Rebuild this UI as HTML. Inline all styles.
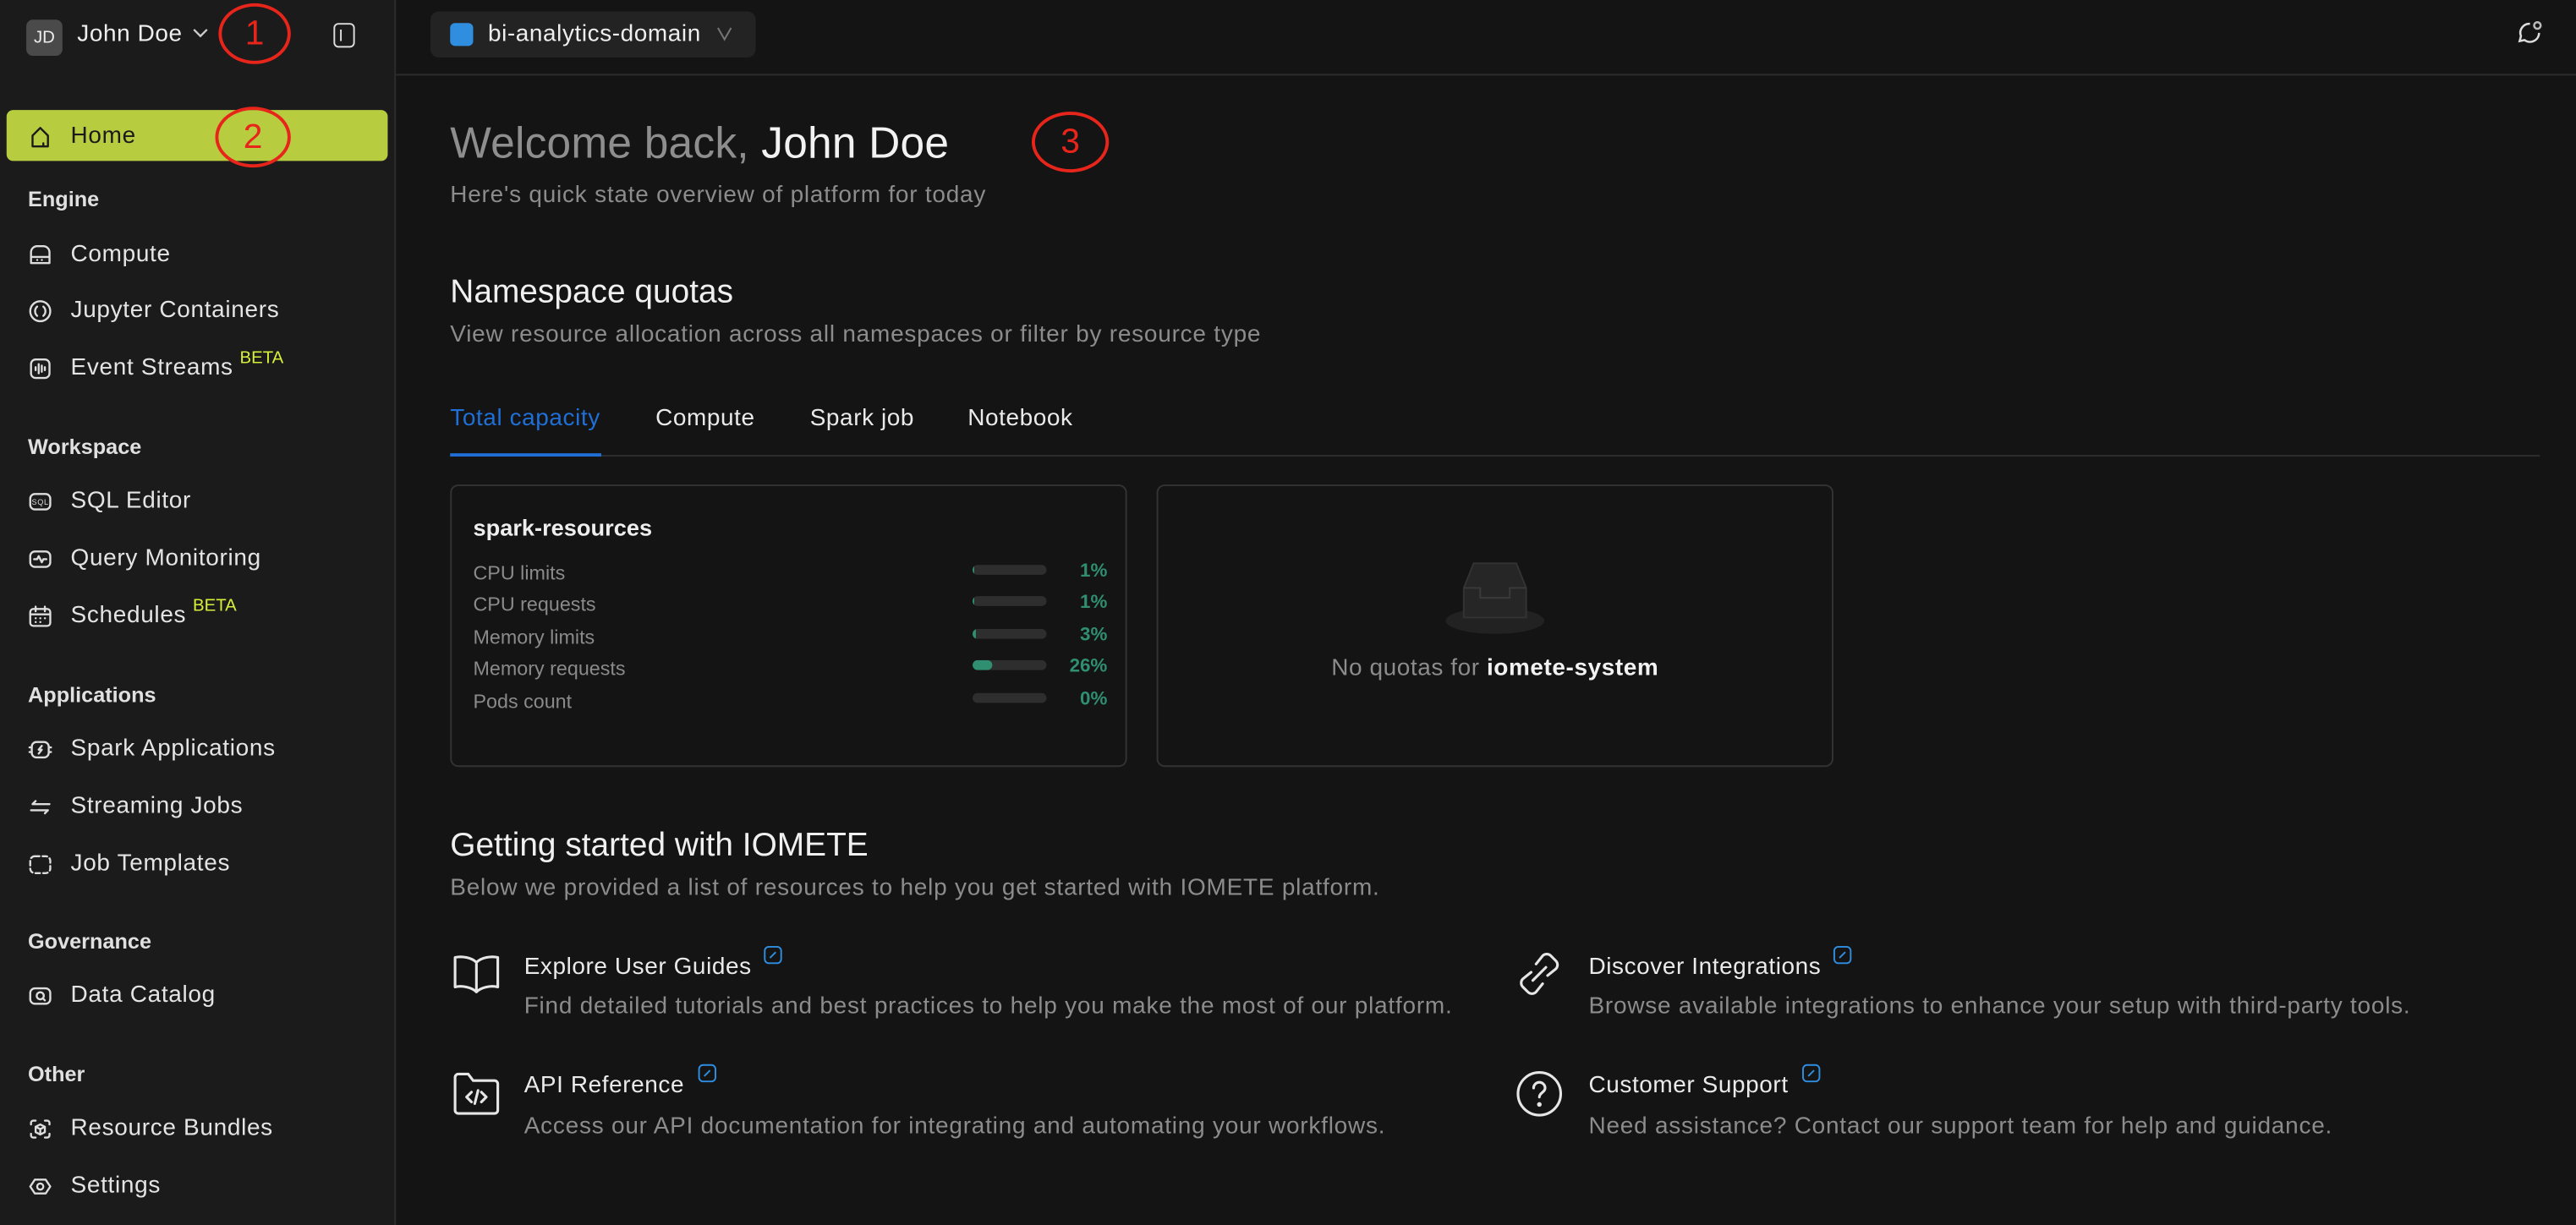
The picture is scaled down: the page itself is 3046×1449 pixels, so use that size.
<!DOCTYPE html>
<html><head><meta charset="utf-8"><style>
html,body{margin:0;padding:0;background:#141414;width:3046px;height:1448px;overflow:hidden}
#w{position:absolute;left:0;top:0;width:1568px;height:746px;transform:scale(1.9426);transform-origin:0 0;font-family:"Liberation Sans",sans-serif;color:#e6e6e6}
.a{position:absolute;white-space:nowrap}
.t14{font-size:14.4px;letter-spacing:.3px}
#sb{position:absolute;left:0;top:0;width:240px;height:746px;background:#1b1b1b;border-right:1px solid #2c2c2c}
.sec{position:absolute;left:17px;font-size:13px;font-weight:bold;color:#e0e0e0;transform:translateY(-50%)}
.it{position:absolute;left:17px;font-size:14.4px;letter-spacing:.35px;color:#e4e4e4;transform:translateY(-50%);display:flex;align-items:center}
.it svg{width:15px;height:15px;margin-right:11px;fill:none;stroke:#ddd;stroke-width:1.3;stroke-linecap:round;stroke-linejoin:round}
.beta{color:#d8ef3a;font-size:10.5px;position:relative;top:-6px;margin-left:4px;letter-spacing:0}
.circ{position:absolute;border:2px solid #e8251b;border-radius:50%;color:#e8251b;font-size:21px;display:flex;align-items:center;justify-content:center;box-sizing:border-box}
.row{position:absolute;left:13px;width:386px;font-size:12px;color:#8a8a8a;transform:translateY(-50%)}
.bar{position:absolute;left:304px;top:2px;width:45px;height:6px;border-radius:3px;background:#2e2e2e;overflow:hidden}
.bar i{position:absolute;left:0;top:0;bottom:0;background:#2f8f70}
.pct{position:absolute;right:0;top:0;color:#2f8f70;font-weight:bold;font-size:11.5px}
.gi svg{position:absolute;width:30px;height:30px;fill:none;stroke:#e6e6e6;stroke-width:1.6;stroke-linecap:round;stroke-linejoin:round}
.gt{position:absolute;font-size:14.4px;letter-spacing:.3px;color:#eaeaea;transform:translateY(-50%)}
.gd{position:absolute;font-size:14.4px;letter-spacing:.4px;color:#8c8c8c;transform:translateY(-50%)}
.ext{display:inline-block;width:11px;height:11px;border:1.3px solid #2f8ee0;border-radius:3px;position:relative;top:-6px;margin-left:8px;box-sizing:border-box}
.ext:after{content:"";position:absolute;left:2px;top:4px;width:5px;height:1.2px;background:#2f8ee0;transform:rotate(-45deg)}
</style></head><body><div id="w">
<div id="sb">
 <div class="a" style="left:16px;top:12px;width:22px;height:22px;background:#4a4a4a;border-radius:4px;font-size:10.5px;color:#eee;display:flex;align-items:center;justify-content:center">JD</div>
 <div class="a t14" style="left:47px;top:13px;color:#eee">John Doe</div>
 <svg class="a" style="left:117px;top:17px" width="10" height="7" viewBox="0 0 10 7"><path d="M1 1l4 4 4-4" stroke="#ccc" fill="none" stroke-width="1.2"/></svg>
 <div class="circ" style="left:133px;top:2px;width:44px;height:37px">1</div>
 <div class="a" style="left:203px;top:14px;width:13px;height:15px;border:1.4px solid #ddd;border-radius:3px;box-sizing:border-box"><div style="position:absolute;left:2.5px;top:2.5px;width:1.4px;height:7px;background:#ddd"></div></div>
 <div class="a" style="left:4px;top:67px;width:232px;height:31px;background:#b8cc40;border-radius:4px"></div>
 <div class="it" style="top:83px;color:#1b1b1b"><svg viewBox="0 0 16 16" style="stroke:#1b1b1b"><path d="M3 14V7l5-5 5 5v7z"/><path d="M10 12v2"/></svg>Home</div>
 <div class="circ" style="left:131px;top:65px;width:46px;height:37px">2</div>
 <div class="sec" style="top:121px">Engine</div>
 <div class="it" style="top:155px"><svg viewBox="0 0 16 16"><path d="M2 9V6a4 4 0 014-4h4a4 4 0 014 4v3M2 9h12v4H2z"/><path d="M6 11h.1M9 11h.1"/></svg>Compute</div>
 <div class="it" style="top:189px"><svg viewBox="0 0 16 16"><circle cx="8" cy="8" r="6.5"/><path d="M6 5a4 4 0 000 6M10 5a4 4 0 010 6"/></svg>Jupyter Containers</div>
 <div class="it" style="top:224px"><svg viewBox="0 0 16 16"><rect x="2" y="2" width="12" height="12" rx="3"/><path d="M5 7v2M7 5v6M9 6v4M11 7v2"/></svg>Event Streams<span class="beta">BETA</span></div>
 <div class="sec" style="top:272px">Workspace</div>
 <div class="it" style="top:305px"><svg viewBox="0 0 16 16"><rect x="1.5" y="3" width="13" height="10" rx="3"/><text x="8" y="10" font-size="5" text-anchor="middle" fill="#ddd" stroke="none" font-family="Liberation Sans">SQL</text></svg>SQL Editor</div>
 <div class="it" style="top:340px"><svg viewBox="0 0 16 16"><rect x="1.5" y="3" width="13" height="10" rx="3"/><path d="M4 8h2l1-2 2 4 1-2h2"/></svg>Query Monitoring</div>
 <div class="it" style="top:375px"><svg viewBox="0 0 16 16"><rect x="1.5" y="3" width="13" height="11" rx="2"/><path d="M1.5 6.5h13M5 1.5v3M11 1.5v3M5 9h.1M8 9h.1M11 9h.1M5 11.5h.1M8 11.5h.1"/></svg>Schedules<span class="beta">BETA</span></div>
 <div class="sec" style="top:423px">Applications</div>
 <div class="it" style="top:456px"><svg viewBox="0 0 16 16"><rect x="2.5" y="3" width="11" height="10" rx="3"/><path d="M1 6.5h1.5M1 9.5h1.5M13.5 6.5H15M13.5 9.5H15M9 5.5L7 8h2l-2 2.5"/></svg>Spark Applications</div>
 <div class="it" style="top:491px"><svg viewBox="0 0 16 16"><path d="M3 6h11M5 4L3 6M2 10h11M11 12l2-2"/></svg>Streaming Jobs</div>
 <div class="it" style="top:526px"><svg viewBox="0 0 16 16" style="stroke-dasharray:3 2"><rect x="1.5" y="2.5" width="13" height="11" rx="3"/></svg>Job Templates</div>
 <div class="sec" style="top:573px">Governance</div>
 <div class="it" style="top:606px"><svg viewBox="0 0 16 16"><rect x="1.5" y="3" width="13" height="10" rx="3"/><circle cx="8" cy="7.8" r="2.3"/><path d="M9.7 9.5l1.3 1.3"/></svg>Data Catalog</div>
 <div class="sec" style="top:654px">Other</div>
 <div class="it" style="top:687px"><svg viewBox="0 0 16 16"><path d="M2 5V4a1.5 1.5 0 011.5-1.5H5M11 2.5h1.5A1.5 1.5 0 0114 4v1M14 11v1a1.5 1.5 0 01-1.5 1.5H11M5 13.5H3.5A1.5 1.5 0 012 12v-1M5 6.5l3-1.5 3 1.5v3.5l-3 1.5-3-1.5zM5 6.5l3 1.5 3-1.5M8 8v3.5"/></svg>Resource Bundles</div>
 <div class="it" style="top:722px"><svg viewBox="0 0 16 16"><path d="M1.5 8l3-4.5h7l3 4.5-3 4.5h-7z"/><circle cx="8" cy="8" r="2"/></svg>Settings</div>
</div>

<div class="a" style="left:241px;top:45px;width:1327px;height:1px;background:#2e2e2e"></div>
<div class="a" style="left:262px;top:7px;width:198px;height:28px;background:#232323;border-radius:5px"></div>
<div class="a" style="left:274px;top:14px;width:14px;height:14px;background:#2f8ee0;border-radius:3px"></div>
<div class="a t14" style="left:297px;top:13px;color:#eee">bi-analytics-domain</div>
<svg class="a" style="left:436px;top:16px" width="10" height="9" viewBox="0 0 10 9"><path d="M1 1l4 7 4-7" stroke="#777" fill="none" stroke-width="1"/></svg>
<svg class="a" style="left:1531px;top:11px" width="18" height="18" viewBox="0 0 18 18" fill="none" stroke="#ddd" stroke-width="1.3"><path d="M9 3.5A5.5 5.5 0 003.5 11l-.8 3 3-.6A5.5 5.5 0 0014.5 9"/><circle cx="13.5" cy="4.5" r="2" stroke="#bbb"/></svg>

<div class="a" style="left:274px;top:72px;font-size:26.5px;letter-spacing:.1px;color:#8e8e8e">Welcome back, <span style="color:#f2f2f2">John Doe</span></div>
<div class="circ" style="left:628px;top:68px;width:47px;height:37px">3</div>
<div class="a t14" style="left:274px;top:111px;color:#8c8c8c;letter-spacing:.4px">Here's quick state overview of platform for today</div>
<div class="a" style="left:274px;top:167px;font-size:20px;color:#f0f0f0">Namespace quotas</div>
<div class="a t14" style="left:274px;top:196px;color:#8c8c8c;letter-spacing:.4px">View resource allocation across all namespaces or filter by resource type</div>
<div class="a t14" style="left:274px;top:247px;color:#1f6fd6">Total capacity</div>
<div class="a t14" style="left:399px;top:247px;color:#eaeaea">Compute</div>
<div class="a t14" style="left:493px;top:247px;color:#eaeaea">Spark job</div>
<div class="a t14" style="left:589px;top:247px;color:#eaeaea">Notebook</div>
<div class="a" style="left:274px;top:277px;width:1272px;height:1px;background:#2e2e2e"></div>
<div class="a" style="left:274px;top:276px;width:92px;height:2px;background:#1f6fd6"></div>

<div class="a" style="left:274px;top:295px;width:412px;height:172px;border:1px solid #333;border-radius:5px;box-sizing:border-box">
 <div class="a" style="left:13px;top:17px;font-size:14px;font-weight:bold;color:#eee">spark-resources</div>
 <div class="row" style="top:53px">CPU limits<div class="bar"><i style="width:1px"></i></div><span class="pct">1%</span></div>
 <div class="row" style="top:72px">CPU requests<div class="bar"><i style="width:1px"></i></div><span class="pct">1%</span></div>
 <div class="row" style="top:92px">Memory limits<div class="bar"><i style="width:2px"></i></div><span class="pct">3%</span></div>
 <div class="row" style="top:111px">Memory requests<div class="bar"><i style="width:12px;border-radius:3px"></i></div><span class="pct">26%</span></div>
 <div class="row" style="top:131px">Pods count<div class="bar"></div><span class="pct">0%</span></div>
</div>
<div class="a" style="left:704px;top:295px;width:412px;height:172px;border:1px solid #333;border-radius:5px;box-sizing:border-box">
 <svg class="a" style="left:172px;top:44px" width="66" height="48" viewBox="0 0 66 48"><ellipse cx="33" cy="38" rx="30" ry="8" fill="#222"/><path d="M14 18l6-15h26l6 15v18H14z" fill="#262626" stroke="#333"/><path d="M14 18h10v6h18v-6h10" fill="none" stroke="#3a3a3a"/></svg>
 <div class="a t14" style="left:0;width:410px;text-align:center;top:103px;color:#8c8c8c">No quotas for <span style="color:#f2f2f2;font-weight:bold">iomete-system</span></div>
</div>

<div class="a" style="left:274px;top:504px;font-size:20px;color:#f0f0f0">Getting started with IOMETE</div>
<div class="a t14" style="left:274px;top:533px;color:#8c8c8c;letter-spacing:.4px">Below we provided a list of resources to help you get started with IOMETE platform.</div>
<div class="gi">
 <svg style="left:275px;top:578px" viewBox="0 0 30 30"><path d="M15 8C12 5 6 4 2 5v18c4-1 10 0 13 3 3-3 9-4 13-3V5c-4-1-10 0-13 3zM15 8v18"/></svg>
 <svg style="left:275px;top:651px" viewBox="0 0 30 30"><path d="M2 5a2 2 0 012-2h6l3 4h13a2 2 0 012 2v16a2 2 0 01-2 2H4a2 2 0 01-2-2z"/><path d="M12 14l-3 3 3 3M18 14l3 3-3 3M16 13l-2 8"/></svg>
 <svg style="left:922px;top:578px" viewBox="0 0 30 30"><path d="M13 9l4-5a3.5 3.5 0 015 0l3 3a3.5 3.5 0 010 5l-5 4M17 21l-4 5a3.5 3.5 0 01-5 0l-3-3a3.5 3.5 0 010-5l5-4M11 19l8-8"/></svg>
 <svg style="left:922px;top:651px" viewBox="0 0 30 30"><circle cx="15" cy="15" r="13"/><path d="M11.5 11.5a3.5 3.5 0 117 0c0 2.5-3.5 3-3.5 5.5"/><circle cx="15" cy="21.5" r=".6" fill="#e6e6e6"/></svg>
</div>
<div class="gt" style="left:319px;top:589px">Explore User Guides<span class="ext"></span></div>
<div class="gd" style="left:319px;top:613px">Find detailed tutorials and best practices to help you make the most of our platform.</div>
<div class="gt" style="left:319px;top:661px">API Reference<span class="ext"></span></div>
<div class="gd" style="left:319px;top:686px">Access our API documentation for integrating and automating your workflows.</div>
<div class="gt" style="left:967px;top:589px">Discover Integrations<span class="ext"></span></div>
<div class="gd" style="left:967px;top:613px">Browse available integrations to enhance your setup with third-party tools.</div>
<div class="gt" style="left:967px;top:661px">Customer Support<span class="ext"></span></div>
<div class="gd" style="left:967px;top:686px">Need assistance? Contact our support team for help and guidance.</div>
</div></body></html>
